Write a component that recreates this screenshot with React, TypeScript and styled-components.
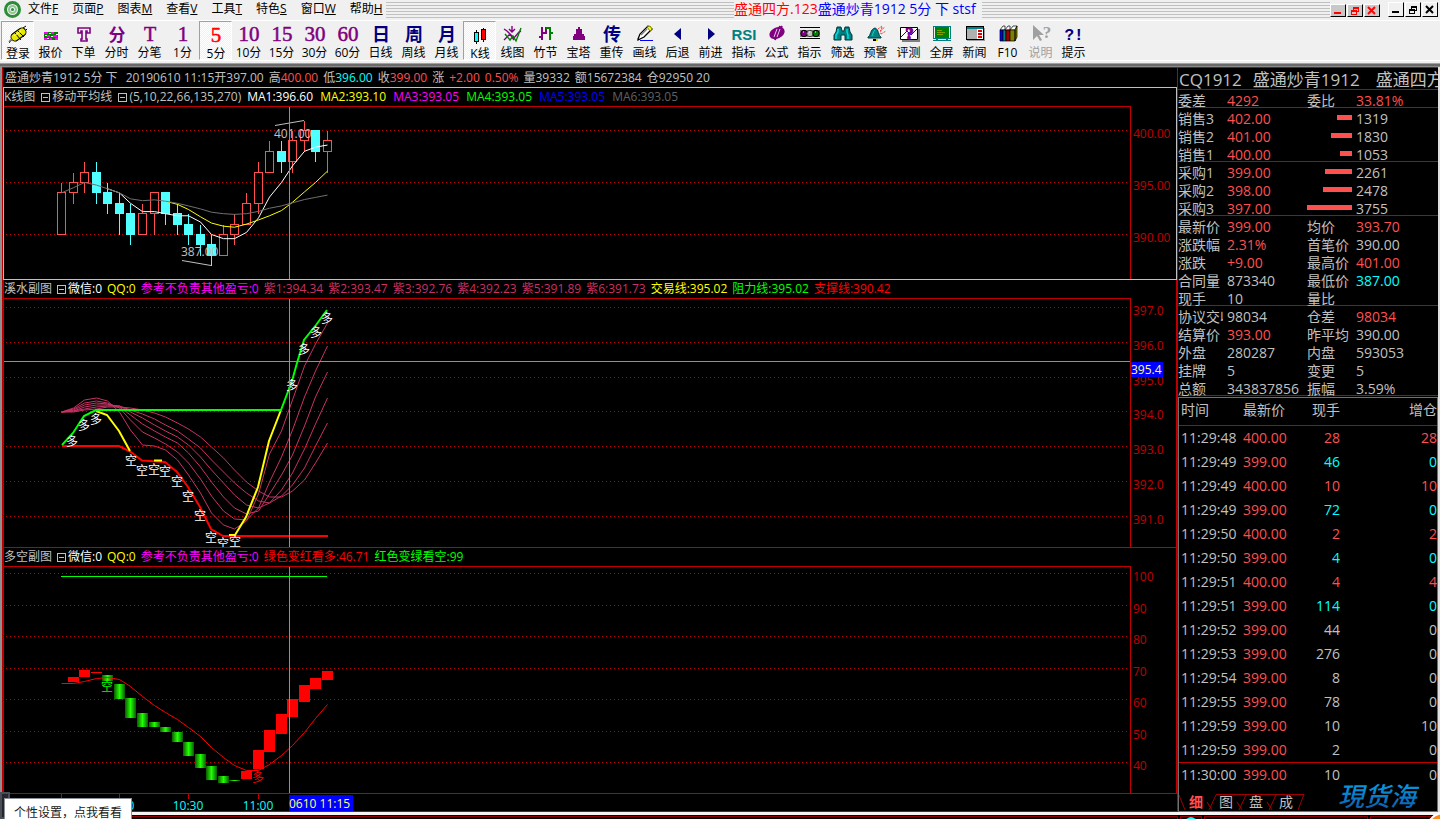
import React from 'react';
import styled, { createGlobalStyle, css } from 'styled-components';

const UI_FONT = '"Open Sans", "Noto Sans CJK SC", sans-serif';
const RED = '#c00000';
const SILVER = '#c0c0c0';
const UP = '#ff5050';
const CYAN = '#00ffff';

const GlobalStyle = createGlobalStyle`
  * { box-sizing: border-box; }
  body {
    margin: 0;
    background: #000;
    font-family: ${UI_FONT};
    font-size: 12px;
    color: ${SILVER};
    overflow-x: hidden;
  }
  button { font-family: inherit; font-size: inherit; padding: 0; margin: 0; border: 0; background: none; color: inherit; }
  table { border-collapse: separate; border-spacing: 0; }
  dl, dd, dt, h1, h2, p { margin: 0; font-weight: normal; }
`;

const Page = styled.div`
  position: relative;
  display: flex;
  flex-direction: column;
  min-height: 100vh;
  overflow: hidden;
`;

/* ---------- menu bar ---------- */

const MenuBar = styled.header`
  display: flex;
  height: 20px;
  background: #f0f0f0;
  color: #000;
`;

const LogoBox = styled.div`
  width: 21px;
  padding-left: 3px;
  svg { display: block; }
`;

const Menus = styled.nav`
  display: flex;
  margin-right: -4px;
`;

const MenuButton = styled.button`
  padding: 0 7px;
  height: 18px;
  line-height: 18px;
  white-space: nowrap;
`;

const Stripes = styled.div`
  flex: 1;
  height: 18px;
  margin-top: 2px;
  background: repeating-linear-gradient(#c0c0c0 0 1px, #f0f0f0 1px 3px);
`;

const WindowTitle = styled.h1`
  padding-right: 6px;
  font-size: 14px;
  line-height: 18px;
  white-space: nowrap;
  color: #0000ff;
  em { font-style: normal; color: #ff0000; }
`;

const WindowButtons = styled.div<{ $inner?: boolean }>`
  display: flex;
  gap: 1px;
  margin: ${(p) => (p.$inner ? '4px 8px 0 0' : '2px 2px 0 0')};
  height: ${(p) => (p.$inner ? 13 : 15)}px;
  button {
    width: 16px;
    height: 100%;
    color: ${(p) => (p.$inner ? '#ff0000' : '#000')};
    background: ${(p) => (p.$inner ? '#c8c8c8' : '#f0f0f0')};
    border: 1px solid;
    border-color: #fff #000 #000 #fff;
    display: grid;
    place-items: center;
  }
`;

/* ---------- toolbar ---------- */

const Toolbar = styled.nav`
  display: flex;
  height: 43px;
  padding: 0 1px;
  background: linear-gradient(#f0f0f0 0 39px, #fff 39px 40px, #f0f0f0 40px);
  border-top: 1px solid #fff;
`;

const ToolButton = styled.button<{ $pressed?: boolean; $disabled?: boolean }>`
  display: flex;
  flex-direction: column;
  align-items: center;
  width: 33px;
  height: 39px;
  padding-top: 3px;
  overflow: hidden;
  color: ${(p) => (p.$disabled ? '#a0a0a0' : '#000')};
  line-height: 18px;
  white-space: nowrap;
  svg { display: block; flex: none; overflow: visible; }
  ${(p) =>
    p.$pressed &&
    css`
      padding: 3px 0 0 1px;
      border: 1px solid;
      border-color: #a0a0a0 #fff #fff #a0a0a0;
      background: repeating-conic-gradient(#f0f0f0 0 25%, #fff 0 50%) 0 0 / 2px 2px;
    `}
`;

const Ridge = styled.div`
  height: 4px;
  background: linear-gradient(#a0a0a0 0 1px, #696969 1px 3px, #888 3px);
`;

/* ---------- workspace ---------- */

const Workspace = styled.main`
  display: flex;
  border-left: 2px solid #909090;
  border-right: 2px solid #e0e0e0;
`;

const ChartColumn = styled.section`
  flex: 1;
  min-width: 0;
  border-top: 1px solid ${RED};
  border-left: 1px solid ${RED};
  border-bottom: 1px solid ${RED};
`;

const QuoteLine = styled.p`
  display: flex;
  gap: 5px;
  height: 19px;
  padding-left: 2px;
  line-height: 19px;
  white-space: nowrap;
  overflow: hidden;
`;

const Tint = styled.span<{ $c: string }>`
  color: ${(p) => p.$c};
`;

const ChartPanel = styled.article<{ $active?: boolean }>`
  border: 1px solid ${(p) => (p.$active ? SILVER : RED)};
  border-top-width: ${(p) => (p.$active ? 1 : 0)}px;
`;

const Legend = styled.header<{ $cell?: number }>`
  display: flex;
  gap: ${(p) => (p.$cell ? 6 : 5)}px;
  height: 18px;
  line-height: 18px;
  white-space: nowrap;
  overflow: hidden;
  & > ${Tint} { min-width: ${(p) => p.$cell ?? 0}px; }
`;

const LegendGroup = styled.h2`
  display: flex;
  align-items: center;
  gap: 2px;
  font-size: 12px;
`;

const Toggle = styled.button`
  width: 9px;
  height: 9px;
  border: 1px solid currentColor;
  display: grid;
  place-items: center;
  &::before { content: ''; width: 5px; height: 1px; background: currentColor; }
`;

const PlotRow = styled.div`
  display: flex;
  position: relative;
`;

const Plot = styled.svg<{ $h: number }>`
  display: block;
  flex: 1;
  min-width: 0;
  height: ${(p) => p.$h}px;
  border-top: 1px solid ${RED};
  border-right: 1px solid ${RED};
`;

const Scale = styled.svg<{ $h: number }>`
  display: block;
  width: 45px;
  height: ${(p) => p.$h}px;
  fill: ${RED};
  overflow: visible;
`;

const PriceFlag = styled.output`
  position: absolute;
  right: 13px;
  top: 64px;
  width: 32px;
  height: 15px;
  line-height: 15px;
  background: #0000ff;
  color: #ffff80;
`;

const TimeAxis = styled.svg`
  display: block;
  width: 100%;
  height: 17px;
  fill: ${CYAN};
`;

/* ---------- quote panel ---------- */

const QuotePanel = styled.aside`
  width: 261px;
  border-top: 1px solid ${RED};
  border-left: 1px solid ${RED};
  font-size: 14px;
  display: flex;
  flex-direction: column;
`;

const Instrument = styled.h2`
  display: flex;
  gap: 11px;
  height: 22px;
  padding-left: 1px;
  border-bottom: 1px solid ${RED};
  font-size: 17px;
  line-height: 23px;
  white-space: nowrap;
  overflow: hidden;
  span + span + span { margin-left: 5px; }
`;

const QuoteRow = styled.div`
  display: grid;
  grid-template-columns: 45px 76px 45px 1fr;
  column-gap: 4px;
  height: 18px;
  line-height: 21px;
  white-space: nowrap;
  dt { overflow: hidden; }
`;

const QuoteBlock = styled.dl`
  border-bottom: 1px solid ${RED};
  & > div:last-child { height: 17px; }
`;

const DepthRow = styled(QuoteRow)`
  grid-template-columns: 45px 125px 1fr;
`;

const DepthBar = styled.dd`
  display: flex;
  justify-content: space-between;
`;

const Bar = styled.i<{ $w: number }>`
  width: ${(p) => p.$w}px;
  height: 5px;
  margin-top: 7px;
  background: ${UP};
`;

const TickBox = styled.section`
  margin-top: 1px;
  border: 1px solid #707070;
  overflow: hidden;
`;

const TickTable = styled.table`
  width: 100%;
  table-layout: fixed;
  th, td { padding: 0; font-weight: normal; text-align: left; white-space: nowrap; height: 24px; line-height: 24px; }
  th { height: 28px; padding-bottom: 3px; border-bottom: 1px solid ${RED}; line-height: 24px; }
  th:first-child, td:first-child { padding-left: 2px; }
  th:nth-child(3), td:nth-child(3), th:nth-child(4), td:nth-child(4) { text-align: right; }
  tr:last-child td { border-top: 1px solid ${RED}; line-height: 23px; }
  thead tr:last-child th { line-height: 24px; }
`;

const TickFooter = styled.footer`
  position: relative;
  display: flex;
  justify-content: space-between;
  align-items: flex-end;
  height: 25px;
  padding-right: 21px;
`;

const TabStrip = styled.div`
  position: relative;
  display: flex;
  height: 17px;
  padding-left: 2px;
  svg { position: absolute; left: 0; top: 0; }
`;

const Tab = styled.button<{ $on?: boolean }>`
  position: relative;
  width: 30px;
  height: 16px;
  line-height: 16px;
  font-size: 14px;
  font-weight: ${(p) => (p.$on ? 700 : 400)};
  color: ${(p) => (p.$on ? UP : SILVER)};
`;

const BrandMark = styled.svg`
  display: block;
  overflow: visible;
`;

/* ---------- bottom edge ---------- */

const BottomEdge = styled.footer`
  flex: 1;
  display: flex;
  gap: 2px;
  min-height: 7px;
  padding: 1px 0 0 3px;
  border-top: 3px solid #f4f4f4;
  background: #000;
`;

const EdgeSlot = styled.div<{ $w?: number }>`
  flex: ${(p) => (p.$w ? `0 0 ${p.$w}px` : '1')};
  border: 1px solid #900000;
  border-bottom: 0;
  overflow: hidden;
`;

const Lamp = styled.i`
  display: block;
  width: 12px;
  height: 8px;
  margin: 0 auto;
  border-radius: 6px 6px 0 0;
  background: ${CYAN};
`;

const Hint = styled.button`
  position: absolute;
  left: 4px;
  top: 798px;
  width: 128px;
  height: 30px;
  background: #fff;
  border: 1px solid #8a8f98;
  color: #202020;
  line-height: 28px;
`;

const HintHandle = styled.i`
  position: absolute;
  left: 0;
  top: 792px;
  width: 10px;
  height: 27px;
  background: #24262c;
  border: 2px solid #4a4e58;
`;

const FloatingBall = styled.i`
  position: absolute;
  left: calc(100% - 16px);
  top: 812px;
  width: 42px;
  height: 42px;
  border-radius: 50%;
  background: #ff8a1c;
  border: 2px solid #fff;
`;

/* ---------- toolbar icons ---------- */

const Glyph = ({ t, c, size = 19, bold = false, serif = true }: { t: string; c: string; size?: number; bold?: boolean; serif?: boolean }) => (
  <text
    x="12"
    y={17}
    textAnchor="middle"
    fill={c}
    stroke={serif ? c : 'none'}
    strokeWidth={serif ? 0.5 : 0}
    fontSize={size}
    fontWeight={bold ? 700 : 400}
    fontFamily={serif ? '"Liberation Serif", "Noto Sans CJK SC", serif' : UI_FONT}
  >
    {t}
  </text>
);

const PURPLE = '#800080';
const NAVY = '#000080';
const TEAL = '#008080';

const icons: Record<string, React.ReactNode> = {
  plug: (
    <g>
      <path d="M3 18l4-4M17 3l3-2M19 6l2-2" stroke="#000" strokeWidth="1" />
      <path d="M9 12l7-5" stroke="#000" strokeWidth="9" strokeLinecap="round" />
      <path d="M9 12l7-5" stroke="#e8e800" strokeWidth="7" strokeLinecap="round" />
      <path d="M9 8l6 7M12 6l6 6" stroke="#000" strokeWidth="1" />
      <path d="M8 11l7-5" stroke="#ffffa0" strokeWidth="1" />
      <path d="M3 17l3-3" stroke="#808080" strokeWidth="2" />
    </g>
  ),
  quote: (
    <g shapeRendering="crispEdges">
      <path d="M5 8h14v8H5z" fill="#008000" />
      <path d="M5 8h4v2H5zM12 8h3v2h-3zM8 11h3v2H8zM14 11h4v2h-4zM5 14h3v2H5zM11 14h2v2h-2zM16 14h3v2h-3z" fill="#ff00ff" />
      <path d="M10 9h2v1h-2zM6 11h2v1H6zM12 12h2v1h-2zM8 14h2v1H8zM17 10h2v1h-2z" fill="#fff" />
    </g>
  ),
  order: (
    <g fill="#f0f0f0" stroke={PURPLE} strokeWidth="1.6">
      <path d="M6 4h12v5h-3v-2h-1v8h1v2h-6v-2h1v-8h-1v2h-3z" />
    </g>
  ),
  kline: (
    <g shapeRendering="crispEdges">
      <path d="M8 5h1v14h-1zM15 3h1v14h-1z" fill="#000" />
      <path d="M6 7h5v10H6zM13 4h5v11h-5z" fill="#000" />
      <path d="M7 8h3v8H7z" fill="#00ffff" />
      <path d="M14 5h3v9h-3z" fill="#f00" />
    </g>
  ),
  lines: (
    <g fill="none" strokeWidth="1.4">
      <path d="M3 5l3 2 7 7 5-6 2-1M3 16l6-6 4 6M11 2v6M8 5l3 3 3-3" stroke={PURPLE} />
      <path d="M4 10l5 6 3-4 3 5 5-13" stroke="#008000" />
    </g>
  ),
  bamboo: (
    <g fill="none" strokeWidth="2" shapeRendering="crispEdges">
      <path d="M5 13h3M8 3v13M8 9h4M12 3v7" stroke={PURPLE} />
      <path d="M12 4h4v12M15 9h4" stroke="#008000" />
    </g>
  ),
  tower: <path d="M11 3h2v2h2v5h2v2h1v4H6v-4h1v-2h2V5h2z" fill={PURPLE} shapeRendering="crispEdges" />,
  pencil: (
    <g>
      <path d="M5 15l2-5 8-8 4 3-8 8-6 3z" fill="#fff" stroke="#000" strokeWidth="1.3" />
      <path d="M14 3l3-1 2 3-2 2z" fill="#ffff00" stroke="#808000" strokeWidth="1" />
      <path d="M8 11l6-6" stroke="#808080" strokeWidth="1.4" />
      <path d="M7 16.5h13" stroke="#0000ff" strokeWidth="1" />
    </g>
  ),
  back: <path d="M15 4v12L8 10z" fill={NAVY} />,
  forward: <path d="M9 4v12l7-6z" fill={NAVY} />,
  formula: (
    <g>
      <ellipse cx="12" cy="9" rx="8" ry="5.5" fill={PURPLE} transform="rotate(-25 12 9)" />
      <path d="M15 2l-5 14M17 2l-4 7" stroke={PURPLE} strokeWidth="2" />
      <path d="M12 5l-3 8M15 5l-3 8" stroke="#e8c8e8" strokeWidth="1" />
    </g>
  ),
  signals: (
    <g>
      <path d="M2 3.500h20M2 14.500h20" stroke="#000" />
      <path d="M2 6h20v7H2z" fill="#808080" />
      <circle cx="6" cy="9.500" r="3.200" fill={PURPLE} stroke="#000" />
      <circle cx="12" cy="9.500" r="3.200" fill="#c0c0c0" stroke="#404040" />
      <circle cx="18" cy="9.500" r="3.200" fill="#008000" stroke="#000" />
      <path d="M5 8h1M11 8h1M17 8h1" stroke="#fff" />
    </g>
  ),
  binoculars: (
    <g>
      <path d="M6 3h4l1 4h2l1-4h4l1 5 2 3v5h-7v-5h-4v5H3v-5l2-3z" fill={TEAL} stroke="#003838" strokeWidth="1" />
      <path d="M7 5v3l-2 3v4M16 5v3l1 3v4" stroke="#00e0e0" strokeWidth="1.5" />
    </g>
  ),
  bell: (
    <g>
      <path d="M4 13c3-1 2-8 7-9 4 1 3 8 6 9v1H4z" fill={TEAL} stroke="#004040" strokeWidth="1" />
      <path d="M8 12c1-2 1-4 3-6" stroke="#00e0e0" fill="none" />
      <path d="M9 16h3" stroke="#000" strokeWidth="2" />
      <path d="M12 16h2" stroke="#e0e000" strokeWidth="2" />
      <path d="M14 5l4-3M16 7l5-4M17 10l5-3M18 3l-2 7" stroke="#f04040" strokeDasharray="2 1" />
    </g>
  ),
  review: (
    <g>
      <path d="M5 17h17V5" stroke="#808080" strokeWidth="2" fill="none" />
      <path d="M3.500 3.500h17v12h-17z" fill="#fff" stroke="#000" />
      <path d="M4 13l6-6 4 4 6-6" stroke="#0000ff" fill="none" />
      <text x="12.500" y="15" fontSize="17" fontWeight="700" textAnchor="middle" fill={PURPLE} stroke={PURPLE} fontFamily="Liberation Serif, serif">?</text>
    </g>
  ),
  screen: (
    <g shapeRendering="crispEdges">
      <path d="M3 2h18v13H3z" fill={TEAL} />
      <path d="M4 3h16v11H4z" fill="#f0f0f0" />
      <path d="M5 3h14v11H5z" fill="#008000" />
      <path d="M7 6h5v1H7zM7 8h8v1H7zM7 10h6v1H7z" fill="#80a000" />
      <path d="M6 15h2v1H6zM16 15h2v1h-2zM3 16h18v1H3z" fill={TEAL} />
    </g>
  ),
  news: (
    <g shapeRendering="crispEdges">
      <path d="M4 4h18v13H4z" fill="#a0a0a0" />
      <path d="M3 2h18v14H3z" fill="#000" />
      <path d="M4 3h16v2H4z" fill={TEAL} />
      <path d="M4 5h10v10H4z" fill="#b0b0b0" />
      <path d="M14 5h6v10h-6z" fill="#fff" />
      <path d="M15 6h4v2h-4zM15 9h4v2h-4zM15 12h4v2h-4z" fill="#e00000" />
    </g>
  ),
  books: (
    <g stroke="#000" strokeWidth=".7">
      <path d="M4 6l3-4h2v4z" fill="#fff" />
      <path d="M4 6h3v11H4z" fill="#0000ff" />
      <path d="M7 6h3v11H7z" fill={TEAL} />
      <path d="M9 6l3-4h2v4z" fill="#fff" />
      <path d="M10 6h4v11h-4z" fill="#a00000" />
      <path d="M14 6l3-4h4l-2 4z" fill="#fff" />
      <path d="M14 6h5v11h-5zM19 6l2-4v11l-2 4z" fill="#808000" />
    </g>
  ),
  help: (
    <g>
      <path d="M4 1v15l4-4 3 5 2-1-3-5h5z" fill="#a0a0a0" />
      <text x="18" y="14" fontSize="17" fontWeight="700" textAnchor="middle" fill="#a0a0a0" fontFamily="Liberation Serif, serif">?</text>
    </g>
  ),
  rsi: (
    <text x="12" y="16" fontSize="15" fontWeight="700" textAnchor="middle" fill={TEAL} fontFamily="Liberation Sans, sans-serif">RSI</text>
  ),
  tip: (
    <text x="12" y="16" fontSize="16" fontWeight="700" textAnchor="middle" fill={NAVY} fontFamily="Liberation Mono, monospace">?!</text>
  ),
};

type Tool = { label: string; icon: React.ReactNode; pressed?: boolean; disabled?: boolean };

const period = (n: string): Tool => ({ label: `${n}分`, icon: <Glyph t={n} c={n === '5' ? '#ff0000' : PURPLE} size={21} /> });
const cjk = (label: string, t: string): Tool => ({ label, icon: <Glyph t={t} c={NAVY} size={18} serif={false} bold /> });

const tools: Tool[] = [
  { label: '登录', icon: icons.plug, pressed: true },
  { label: '报价', icon: icons.quote },
  { label: '下单', icon: icons.order },
  { label: '分时', icon: <Glyph t="分" c={PURPLE} size={17} serif={false} bold /> },
  { label: '分笔', icon: <Glyph t="T" c={PURPLE} size={20} /> },
  period('1'),
  { ...period('5'), pressed: true },
  period('10'),
  period('15'),
  period('30'),
  period('60'),
  cjk('日线', '日'),
  cjk('周线', '周'),
  cjk('月线', '月'),
  { label: 'K线', icon: icons.kline, pressed: true },
  { label: '线图', icon: icons.lines },
  { label: '竹节', icon: icons.bamboo },
  { label: '宝塔', icon: icons.tower },
  cjk('重传', '传'),
  { label: '画线', icon: icons.pencil },
  { label: '后退', icon: icons.back },
  { label: '前进', icon: icons.forward },
  { label: '指标', icon: icons.rsi },
  { label: '公式', icon: icons.formula },
  { label: '指示', icon: icons.signals },
  { label: '筛选', icon: icons.binoculars },
  { label: '预警', icon: icons.bell },
  { label: '评测', icon: icons.review },
  { label: '全屏', icon: icons.screen },
  { label: '新闻', icon: icons.news },
  { label: 'F10', icon: icons.books },
  { label: '说明', icon: icons.help, disabled: true },
  { label: '提示', icon: icons.tip },
];

const menus: [string, string][] = [
  ['文件', 'F'], ['页面', 'P'], ['图表', 'M'], ['查看', 'V'],
  ['工具', 'T'], ['特色', 'S'], ['窗口', 'W'], ['帮助', 'H'],
];

const MinIcon = () => (
  <svg width="12" height="10" aria-hidden="true"><path d="M2 7h7" stroke="currentColor" strokeWidth="2" /></svg>
);
const RestoreIcon = () => (
  <svg width="12" height="10" fill="none" stroke="currentColor" aria-hidden="true" shapeRendering="crispEdges">
    <path d="M4.500 4V1.500h5v4H8M4 2.500h6" /><path d="M2.500 4.500h5v4h-5zM2 5.500h6" />
  </svg>
);
const CloseIcon = () => (
  <svg width="12" height="10" aria-hidden="true"><path d="M2 1l7 7M9 1l-7 7" stroke="currentColor" strokeWidth="2" /></svg>
);

const ControlSet = ({ inner }: { inner?: boolean }) => (
  <WindowButtons $inner={inner}>
    <button aria-label="最小化"><MinIcon /></button>
    <button aria-label="还原"><RestoreIcon /></button>
    <button aria-label="关闭"><CloseIcon /></button>
  </WindowButtons>
);

/* ---------- chart data ---------- */

// open, high, low, close of each 5-minute bar
const bars: number[][] = [
  [390, 395, 390, 394], [394, 396, 393, 395], [395, 397, 394, 396], [396, 397, 393, 394],
  [394, 395, 392, 393], [393, 394, 390, 392], [392, 393, 389, 390], [390, 393, 390, 392],
  [392, 394, 390, 394], [394, 394, 391, 392], [392, 393, 390, 391], [391, 392, 389, 390],
  [390, 391, 388, 389], [389, 390, 387, 388], [388, 391, 388, 390], [390, 392, 389, 391],
  [391, 394, 391, 393], [393, 397, 392, 396], [396, 399, 396, 398], [398, 399, 396, 397],
  [397, 400, 396, 399], [399, 401, 398, 400], [400, 400, 397, 398], [398, 400, 396, 399],
];
const closes = bars.map((b) => b[3]);
const barX = (i: number) => Math.round(57 + i * 11.565) + 0.5;
const CURSOR_X = 285.5;

const average = (n: number) =>
  closes.map((_, i) => {
    const part = closes.slice(Math.max(0, i - n + 1), i + 1);
    return part.reduce((a, b) => a + b, 0) / part.length;
  });

const join = (pts: number[][]) => pts.map((p) => p.join(',')).join(' ');

const priceY = (p: number) => Math.round((400 - p) * 10.4 + 23) + 0.5;
const maLine = (n: number, from: number) =>
  join(average(n).map((v, i) => [barX(i), (400 - v) * 10.4 + 23.5]).slice(from));

const waveY = (v: number) => Math.round((397 - v) * 34.83 + 8) + 0.5;
const strengthY = (v: number) => Math.round((100 - v) * 3.15 + 6) + 0.5;

// smoothed trend lines, one height per bar, measured from the top of the plot
const waves: number[][] = [
  [113, 109, 101, 99, 102, 113, 131, 146, 147, 151, 161, 176, 194, 214, 226, 230, 222, 195, 155, 132, 101, 67, 45, 24],
  [113, 110, 104, 102, 104, 109, 121, 133, 139, 145, 153, 164, 180, 197, 212, 220, 221, 209, 183, 158, 131, 98, 72, 47],
  [113, 111, 106, 104, 105, 108, 116, 125, 132, 138, 144, 154, 168, 183, 198, 209, 215, 212, 195, 176, 156, 127, 98, 73],
  [113, 112, 108, 106, 106, 107, 113, 119, 126, 132, 138, 146, 158, 171, 184, 196, 206, 209, 204, 191, 174, 150, 125, 99],
  [113, 112, 110, 108, 107, 107, 111, 115, 120, 126, 132, 140, 149, 161, 173, 184, 194, 202, 204, 197, 186, 169, 147, 124],
  [113, 113, 111, 110, 108, 108, 109, 111, 114, 118, 124, 130, 138, 148, 159, 171, 183, 192, 198, 198, 192, 181, 164, 144],
];

const longMarks = [[68, 142], [80, 126], [92, 120], [288, 86], [300, 50], [312, 33], [323, 19]];
const shortMarks = [[127, 161], [138, 171], [150, 170], [161, 172], [173, 182], [184, 197], [196, 216], [207, 238], [219, 244], [231, 242]];

// top and height of the strength blocks; index is the bar number
const blocks: { i: number; y: number; h: number; up: boolean }[] = [
  { i: 1, y: 110, h: 5, up: true }, { i: 2, y: 103, h: 7, up: true }, { i: 3, y: 105, h: 1, up: true },
  { i: 4, y: 108, h: 6, up: false }, { i: 5, y: 117, h: 15, up: false }, { i: 6, y: 131, h: 20, up: false },
  { i: 7, y: 146, h: 14, up: false }, { i: 8, y: 155, h: 5, up: false }, { i: 9, y: 160, h: 5, up: false },
  { i: 10, y: 165, h: 10, up: false }, { i: 11, y: 175, h: 14, up: false }, { i: 12, y: 187, h: 14, up: false },
  { i: 13, y: 199, h: 14, up: false }, { i: 14, y: 209, h: 7, up: false }, { i: 15, y: 213, h: 1, up: false },
  { i: 16, y: 204, h: 8, up: true }, { i: 17, y: 183, h: 19, up: true }, { i: 18, y: 163, h: 22, up: true },
  { i: 19, y: 147, h: 20, up: true }, { i: 20, y: 132, h: 18, up: true }, { i: 21, y: 118, h: 17, up: true },
  { i: 22, y: 111, h: 11, up: true }, { i: 23, y: 104, h: 9, up: true },
];

const strengthCurve = [116, 116, 114, 111, 110, 112, 119, 129, 138, 145, 152, 160, 169, 180, 190, 198, 203, 203, 197, 188, 178, 165, 151, 137];

const GridLines = ({ ys }: { ys: number[] }) => (
  <>
    {ys.map((y) => (
      <line key={y} x1="2" x2="100%" y1={y} y2={y} stroke={RED} strokeDasharray="1 3" shapeRendering="crispEdges" />
    ))}
  </>
);

const Cursor = () => <line x1={CURSOR_X} x2={CURSOR_X} y1="0" y2="100%" stroke="#909090" shapeRendering="crispEdges" />;

const ScaleLabels = ({ items, h }: { items: [number, string][]; h: number }) => (
  <Scale $h={h}>
    {items.map(([y, t]) => (
      <text key={t} x="2" y={y + 8}>{t}</text>
    ))}
  </Scale>
);

const PriceChart = () => (
  <PlotRow>
    <Plot $h={173} role="img" aria-label="K线图">
      <GridLines ys={[400, 395, 390].map(priceY)} />
      {bars.map(([o, hi, lo, c], i) => {
        const x = barX(i);
        const up = c > o;
        const top = priceY(Math.max(o, c));
        const h = priceY(Math.min(o, c)) - top;
        return (
          <g key={i} stroke={up ? UP : '#50ffff'} fill={up ? 'none' : '#50ffff'} shapeRendering="crispEdges">
            <path d={`M${x} ${priceY(hi)}V${top}M${x} ${top + h}V${priceY(lo)}`} />
            <rect x={x - 4} y={top} width="8" height={h} />
          </g>
        );
      })}
      <g fill="none">
        <polyline points={maLine(5, 4)} stroke="#fff" />
        <polyline points={maLine(10, 9)} stroke="#ffff00" />
        <polyline points={maLine(270, 0)} stroke="#707070" />
        <path d="M271 18.500L300 13.500M178 153.500L207 158.500" stroke={SILVER} />
      </g>
      <g fill={SILVER}>
        <text x="270" y="31">401.00</text>
        <text x="177" y="149">387.00</text>
      </g>
      <Cursor />
    </Plot>
    <ScaleLabels h={173} items={[400, 395, 390].map((v) => [priceY(v), v.toFixed(2)])} />
  </PlotRow>
);

const WaveChart = () => {
  const levels = [397, 396, 395, 394, 393, 392, 391];
  return (
    <PlotRow>
      <Plot $h={249} role="img" aria-label="溪水副图">
        <GridLines ys={levels.map(waveY)} />
        <g fill="none">
          {waves.map((w, k) => (
            <polyline key={k} points={join(w.map((y, i) => [barX(i), y]))} stroke="#c83264" />
          ))}
          <g strokeWidth="2">
            <path d="M58 147H115L127 153L138 161.500L161 163L173 173L184 188L196 208L207 230L219 237H324" stroke="#ff0000" />
            <path d="M92 112L103 116L115 132L126 152M150 161.500H158M225 236H231L242 218L254 188L265 142L277 111" stroke="#ffff00" />
            <path d="M58 146L69 134L80 117L92 111H277L288 82L293 64L300 41L312 26L323 11" stroke="#00ff00" />
          </g>
        </g>
        <g fill="#fff" textAnchor="middle">
          {longMarks.map(([x, y]) => <text key={x} x={x} y={y + 5}>多</text>)}
          {shortMarks.map(([x, y]) => <text key={x} x={x} y={y + 5}>空</text>)}
        </g>
        <Cursor />
        <line x1="0" x2="100%" y1="62.500" y2="62.500" stroke="#909090" shapeRendering="crispEdges" />
      </Plot>
      <ScaleLabels h={249} items={levels.map((v) => [waveY(v), v.toFixed(1)])} />
      <PriceFlag>395.4</PriceFlag>
    </PlotRow>
  );
};

const StrengthChart = () => {
  const levels = [100, 90, 80, 70, 60, 50, 40];
  return (
    <PlotRow>
      <Plot $h={227} role="img" aria-label="多空副图">
        <defs>
          <linearGradient id="fall">
            <stop offset="0" stopColor="#0a5a00" />
            <stop offset=".5" stopColor="#22ff00" />
            <stop offset="1" stopColor="#0a5a00" />
          </linearGradient>
        </defs>
        <GridLines ys={levels.map(strengthY)} />
        <path d="M57 9.500H323" stroke="#00ff00" />
        {blocks.map((b) => (
          <rect key={b.i} x={barX(b.i) - 5.5} y={b.y} width="11" height={b.h} fill={b.up ? '#ff0000' : 'url(#fall)'} />
        ))}
        <polyline points={join(strengthCurve.map((y, i) => [barX(i), y + 0.5]))} stroke="#ff0000" fill="none" />
        <text x="103" y="124" textAnchor="middle" fill="#00ff00">空</text>
        <text x="254" y="215" textAnchor="middle" fill="#ff0000">多</text>
        <Cursor />
      </Plot>
      <ScaleLabels h={227} items={levels.map((v) => [strengthY(v), String(v)])} />
    </PlotRow>
  );
};

/* ---------- quote data ---------- */

const depth: [string, string, number, string][][] = [
  [['销售3', '402.00', 15, '1319'], ['销售2', '401.00', 21, '1830'], ['销售1', '400.00', 12, '1053']],
  [['采购1', '399.00', 27, '2261'], ['采购2', '398.00', 29, '2478'], ['采购3', '397.00', 45, '3755']],
];

type Stat = [string, string, string, string, string, string];
const stats: Stat[][] = [
  [
    ['最新价', '399.00', UP, '均价', '393.70', UP],
    ['涨跌幅', '2.31%', UP, '首笔价', '390.00', SILVER],
    ['涨跌', '+9.00', UP, '最高价', '401.00', UP],
    ['合同量', '873340', SILVER, '最低价', '387.00', CYAN],
    ['现手', '10', SILVER, '量比', '', SILVER],
  ],
  [
    ['协议交收', '98034', SILVER, '仓差', '98034', UP],
    ['结算价', '393.00', UP, '昨平均', '390.00', SILVER],
    ['外盘', '280287', SILVER, '内盘', '593053', SILVER],
    ['挂牌', '5', SILVER, '变更', '5', SILVER],
    ['总额', '343837856', SILVER, '振幅', '3.59%', SILVER],
  ],
];

const ticks: [string, string, string, string, string][] = [
  ['11:29:48', '400.00', '28', '28', UP],
  ['11:29:49', '399.00', '46', '0', CYAN],
  ['11:29:49', '400.00', '10', '10', UP],
  ['11:29:49', '399.00', '72', '0', CYAN],
  ['11:29:50', '400.00', '2', '2', UP],
  ['11:29:50', '399.00', '4', '0', CYAN],
  ['11:29:51', '400.00', '4', '4', UP],
  ['11:29:51', '399.00', '114', '0', CYAN],
  ['11:29:52', '399.00', '44', '0', SILVER],
  ['11:29:53', '399.00', '276', '0', SILVER],
  ['11:29:54', '399.00', '8', '0', SILVER],
  ['11:29:55', '399.00', '78', '0', SILVER],
  ['11:29:59', '399.00', '10', '10', SILVER],
  ['11:29:59', '399.00', '2', '0', SILVER],
  ['11:30:00', '399.00', '10', '0', SILVER],
];

const StatRow = ({ s }: { s: Stat }) => (
  <QuoteRow>
    <dt>{s[0]}</dt>
    <dd><Tint $c={s[2]}>{s[1]}</Tint></dd>
    <dt>{s[3]}</dt>
    <dd><Tint $c={s[5]}>{s[4]}</Tint></dd>
  </QuoteRow>
);

const Readings = ({ items }: { items: [string, string][] }) => (
  <>
    {items.map(([t, c]) => <Tint key={t} $c={c}>{t}</Tint>)}
  </>
);

const notice: [string, string][] = [['QQ:0', '#ffff00'], ['参考不负责其他盈亏:0', '#ff00ff']];
const waveLegend: [string, string][] = ['394.34', '393.47', '392.76', '392.23', '391.89', '391.73'].map(
  (v, i) => [`紫${i + 1}:${v}`, '#c83264'] as [string, string],
);

export default function App() {
  return (
    <Page>
      <GlobalStyle />
      <MenuBar>
        <LogoBox>
          <svg width="18" height="19" viewBox="0 0 18 19" fill="none" aria-hidden="true">
            <circle cx="9.500" cy="9.500" r="7" stroke="#2e8b3a" strokeWidth="3" />
            <circle cx="9.500" cy="9.500" r="3.500" stroke="#8cc890" strokeWidth="2" />
            <circle cx="9.500" cy="9.500" r="1.500" fill="#2e8b3a" />
          </svg>
        </LogoBox>
        <Menus>
          {menus.map(([t, k]) => (
            <MenuButton key={k}>{t}<u>{k}</u></MenuButton>
          ))}
        </Menus>
        <Stripes />
        <WindowTitle><em>盛通四方.123</em>盛通炒青1912 5分 下 stsf</WindowTitle>
        <Stripes />
        <ControlSet inner />
        <ControlSet />
      </MenuBar>
      <Toolbar>
        {tools.map((t) => (
          <ToolButton key={t.label} $pressed={t.pressed} $disabled={t.disabled} disabled={t.disabled}>
            <svg width="24" height="20" viewBox="0 0 24 20" fill="none" aria-hidden="true">{t.icon}</svg>
            {t.label}
          </ToolButton>
        ))}
      </Toolbar>
      <Ridge />
      <Workspace>
        <ChartColumn>
          <QuoteLine>
            <span>盛通炒青1912 5分 下</span>
            <span>&nbsp;20190610 11:15开397.00</span>
            <span>高<Tint $c={UP}>400.00</Tint></span>
            <span>低<Tint $c={CYAN}>396.00</Tint></span>
            <span>收<Tint $c={UP}>399.00</Tint></span>
            <span>涨</span>
            <Tint $c={UP}>+2.00</Tint>
            <Tint $c={UP}>0.50%</Tint>
            <span>量39332</span>
            <span>额15672384</span>
            <span>仓92950 20</span>
          </QuoteLine>
          <ChartPanel $active>
            <Legend $cell={67}>
              <span>K线图</span>
              <LegendGroup><Toggle aria-label="折叠" />移动平均线</LegendGroup>
              <LegendGroup><Toggle aria-label="折叠参数" />(5,10,22,66,135,270)</LegendGroup>
              <Readings
                items={[
                  ['MA1:396.60', '#fff'], ['MA2:393.10', '#ffff00'], ['MA3:393.05', '#ff00ff'],
                  ['MA4:393.05', '#00ff00'], ['MA5:393.05', '#0000ff'], ['MA6:393.05', '#606060'],
                ]}
              />
            </Legend>
            <PriceChart />
          </ChartPanel>
          <ChartPanel>
            <Legend>
              <span>溪水副图</span>
              <LegendGroup><Toggle aria-label="折叠" /><Tint $c="#fff">微信:0</Tint></LegendGroup>
              <Readings items={[...notice, ...waveLegend, ['交易线:395.02', '#ffff00'], ['阻力线:395.02', '#00ff00'], ['支撑线:390.42', '#ff0000']]} />
            </Legend>
            <WaveChart />
          </ChartPanel>
          <ChartPanel>
            <Legend>
              <span>多空副图</span>
              <LegendGroup><Toggle aria-label="折叠" /><Tint $c="#fff">微信:0</Tint></LegendGroup>
              <Readings items={[...notice, ['绿色变红看多:46.71', '#ff0000'], ['红色变绿看空:99', '#00ff00']]} />
            </Legend>
            <StrengthChart />
          </ChartPanel>
          <TimeAxis role="img" aria-label="时间轴">
            <path d="M58.500 0v5M116.500 0v5M185.500 0v5M255.500 0v5" stroke={RED} />
            <g textAnchor="middle">
              <text x="116" y="16">10:00</text>
              <text x="185" y="16">10:30</text>
              <text x="255" y="16">11:00</text>
            </g>
            <rect x="286" y="1" width="64" height="16" fill="#0000ff" />
            <text x="286" y="14" fill="#ffff80">0610 11:15</text>
          </TimeAxis>
        </ChartColumn>
        <QuotePanel>
          <Instrument><span>CQ1912</span><span>盛通炒青1912</span><span>盛通四方</span></Instrument>
          <QuoteBlock><StatRow s={['委差', '4292', UP, '委比', '33.81%', UP]} /></QuoteBlock>
          {depth.map((side, i) => (
            <QuoteBlock key={i}>
              {side.map(([name, price, w, vol]) => (
                <DepthRow key={name}>
                  <dt>{name}</dt>
                  <DepthBar><Tint $c={UP}>{price}</Tint><Bar $w={w} /></DepthBar>
                  <dd>{vol}</dd>
                </DepthRow>
              ))}
            </QuoteBlock>
          ))}
          {stats.map((rows, i) => (
            <QuoteBlock key={i}>{rows.map((s) => <StatRow key={s[0]} s={s} />)}</QuoteBlock>
          ))}
          <TickBox>
            <TickTable>
              <colgroup>
                <col width="64" />
                <col width="50" />
                <col width="47" />
                <col />
              </colgroup>
              <thead>
                <tr><th>时间</th><th>最新价</th><th>现手</th><th>增仓</th></tr>
              </thead>
              <tbody>
                {ticks.map(([time, price, vol, inc, c], i) => (
                  <tr key={i}>
                    <td>{time}</td>
                    <td><Tint $c={UP}>{price}</Tint></td>
                    <td><Tint $c={c}>{vol}</Tint></td>
                    <td><Tint $c={c}>{inc}</Tint></td>
                  </tr>
                ))}
              </tbody>
            </TickTable>
            <TickFooter>
              <TabStrip>
                <svg width="127" height="17" fill="none" stroke="#a00000" aria-hidden="true">
                  <path d="M0 1L6 16M37 .500H125L119 16M37 1L30 16M28 8L33 16M67 1L60 16M58 8L63 16M97 1L90 16M88 8L93 16" />
                </svg>
                <Tab $on>细</Tab>
                <Tab>图</Tab>
                <Tab>盘</Tab>
                <Tab>成</Tab>
              </TabStrip>
              <BrandMark width="78" height="27" role="img" aria-label="現货海">
                <defs>
                  <linearGradient id="brand" x2="0" y2="1">
                    <stop offset="0" stopColor="#00aaf0" />
                    <stop offset="1" stopColor="#1450a0" />
                  </linearGradient>
                </defs>
                <text x="0" y="22" fontSize="26" fontWeight="500" fontStyle="italic" fill="url(#brand)">現货海</text>
              </BrandMark>
            </TickFooter>
          </TickBox>
        </QuotePanel>
      </Workspace>
      <BottomEdge>
        <EdgeSlot />
        <EdgeSlot $w={22}><Lamp /></EdgeSlot>
        <EdgeSlot $w={164} />
        <EdgeSlot $w={70} />
      </BottomEdge>
      <HintHandle />
      <Hint>个性设置，点我看看</Hint>
      <FloatingBall />
    </Page>
  );
}
